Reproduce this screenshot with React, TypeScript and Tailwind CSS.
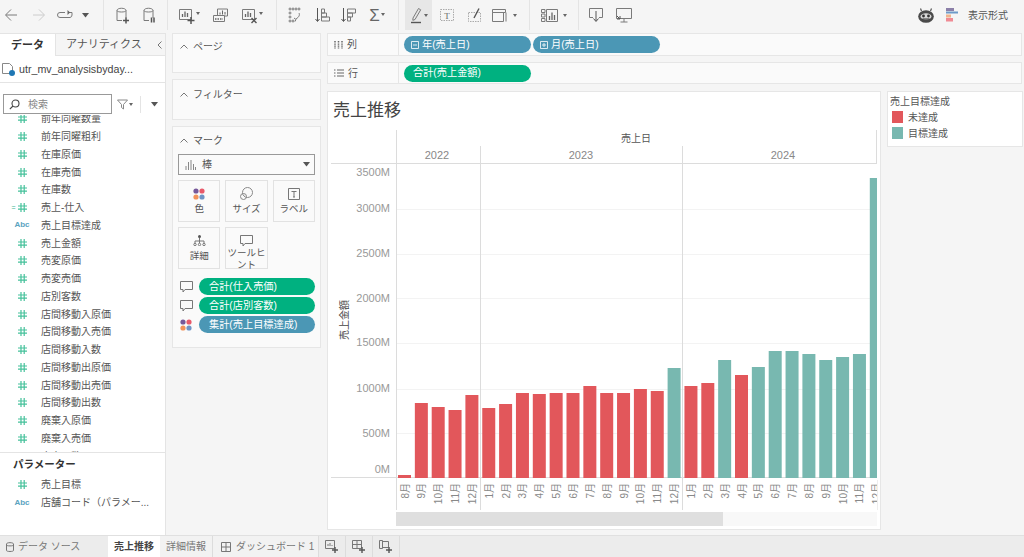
import React from "react";

const G = "#7a7a7a";
const Svg = ({ w = 22, h = 20, children }: { w?: number; h?: number; children: React.ReactNode }) => (
  <svg width={w} height={h} viewBox={`0 0 ${w} ${h}`} fill="none" stroke={G} strokeWidth="1">
    {children}
  </svg>
);
const Caret = () => (
  <svg width="7" height="5" viewBox="0 0 7 5"><path d="M0 0h7L3.500 4.500z" fill="#555" /></svg>
);
const MiniCaret = () => (
  <svg width="4" height="3" viewBox="0 0 4 3"><path d="M0 0h4L2 3z" fill="#666" /></svg>
);
const Sep = () => <div className="w-px h-[30px] bg-[#e4e4e4] shrink-0" />;
const Cell = ({ className, children }: { className: string; children?: React.ReactNode }) => (
  <div className={`flex items-center justify-center shrink-0 h-[30px] ${className}`}>{children}</div>
);
const Db = ({ mark }: { mark: "plus" | "pause" }) => (
  <Svg w={16} h={20}>
    <path d="M3 5.500c0-3 9-3 9 0V13M3 5.500V15.500h5M3 5.500c0 2 9 2 9 0" />
    {mark === "plus" ? (
      <path d="M12 12.500v6M9 15.500h6" stroke="#555" strokeWidth="1.500" />
    ) : (
      <path d="M10.500 12.500v5M13 12.500v5" stroke="#555" strokeWidth="1.500" />
    )}
  </Svg>
);
const ChartBox = ({ mark }: { mark: "plus" | "x" }) => (
  <Svg w={20} h={20}>
    <path d="M1.500 4.500h12v10h-12z" />
    <path d="M4.500 12V9M7 12V6.500M9.500 12V8" stroke="#666" strokeWidth="1.300" />
    {mark === "plus" ? (
      <path d="M13 12v7M9.500 15.500h7" stroke="#555" strokeWidth="1.500" />
    ) : (
      <path d="M10.500 13l5 5M15.500 13l-5 5" stroke="#555" strokeWidth="1.400" />
    )}
  </Svg>
);
const Hash = ({ calc }: { calc?: boolean }) => (
  <span className="relative flex w-[9px] h-[9px]">
    {calc && <span className="absolute -left-[6px] top-0 text-[7px] leading-[9px] text-[#3bb58e]">=</span>}
    <svg width="9" height="9" viewBox="0 0 9 9" stroke="#45c19b" strokeWidth="1.200">
      <path d="M3 0v9M6.200 0v9M0 3h9M0 6.200h9" />
    </svg>
  </span>
);
const Abc = () => <span className="text-[8px] leading-none text-[#5aa3bf] font-bold">Abc</span>;

const fields: [string, string][] = [
  ["前年同曜数量", "n"], ["前年同曜粗利", "n"], ["在庫原価", "n"], ["在庫売価", "n"], ["在庫数", "n"],
  ["売上-仕入", "c"], ["売上目標達成", "a"], ["売上金額", "n"], ["売変原価", "n"], ["売変売価", "n"],
  ["店別客数", "n"], ["店間移動入原価", "n"], ["店間移動入売価", "n"], ["店間移動入数", "n"],
  ["店間移動出原価", "n"], ["店間移動出売価", "n"], ["店間移動出数", "n"], ["廃棄入原価", "n"],
  ["廃棄入売価", "n"], ["廃棄入数", "n"],
];

const FieldRow = ({ name, kind }: { name: string; kind: string }) => (
  <div className="flex items-center h-[17.75px] shrink-0">
    <div className="w-[41px] flex justify-center pl-[3px] shrink-0">
      {kind === "a" ? <Abc /> : <Hash calc={kind === "c"} />}
    </div>
    <span className="text-[10px] text-[#555] whitespace-nowrap">{name}</span>
  </div>
);

const Chevron = () => (
  <svg width="8" height="5" viewBox="0 0 8 5" fill="none" stroke="#777"><path d="M.5 4.500L4 1l3.500 3.500" /></svg>
);

const MarkBtn = ({ label, icon, two }: { label: React.ReactNode; icon: React.ReactNode; two?: boolean }) => (
  <div className="h-[42px] bg-[#fafafa] border border-[#e2e2e2] flex flex-col items-center pt-[6px]">
    <div className="h-[13px] flex items-center justify-center shrink-0">{icon}</div>
    <div className={`text-[9.500px] text-[#555] text-center whitespace-pre ${two ? "leading-[11.500px] mt-[0px]" : "leading-[11px] mt-[3px]"}`}>{label}</div>
  </div>
);

const Bubble = () => (
  <svg width="13" height="12" viewBox="0 0 13 12" fill="none" stroke="#777">
    <path d="M.5.500h12v8H5L3 11V8.500H.5z" />
  </svg>
);
const Dots = () => (
  <svg width="12" height="12" viewBox="0 0 12 12">
    <circle cx="3" cy="3" r="2.600" fill="#76589a" />
    <circle cx="9" cy="3" r="2.600" fill="#e8596a" />
    <circle cx="3" cy="9" r="2.600" fill="#f2925a" />
    <circle cx="9" cy="9" r="2.600" fill="#6f94c6" />
  </svg>
);

const Pill = ({ color, text }: { color: string; text: string }) => (
  <div className={`w-[116px] h-[17px] rounded-full flex items-center ${color} pl-[10px] text-[10.200px] text-white whitespace-nowrap`}>
    {text}
  </div>
);

const Card = ({ title, className, inner }: { title: string; className: string; inner: string }) => (
  <div className={`bg-[#fafafa] border border-[#e6e6e6] shrink-0 ${className}`}>
    <div className={`flex items-center gap-[5px] pl-[7px] ${inner}`}>
      <Chevron />
      <span className="text-[10px] text-[#555]">{title}</span>
    </div>
  </div>
);

const ShelfPill = ({ text, sign }: { text: string; sign?: "-" | "+" }) => (
  <div className={`w-[127px] h-[17px] rounded-full flex items-center text-[10.200px] text-white whitespace-nowrap ${sign ? "bg-[#4b97b5] pl-[7px] gap-[3px]" : "bg-[#00b180] pl-[9px]"}`}>
    {sign && (
      <svg width="8" height="8" viewBox="0 0 8 8" fill="none" stroke="#fff" strokeWidth=".8">
        <path d="M.5.500h7v7h-7z" />
        <path d={sign === "-" ? "M2 4h4" : "M2 4h4M4 2v4"} />
      </svg>
    )}
    {text}
  </div>
);

const RED = "#e2575b";
const TEAL = "#78b8b0";
const bars: [string, number, string][] = [
  ["8月", 475, RED], ["9月", 403, RED], ["10月", 407, RED], ["11月", 410, RED], ["12月", 395, RED],
  ["1月", 408, RED], ["2月", 404, RED], ["3月", 393, RED], ["4月", 394, RED], ["5月", 393, RED],
  ["6月", 393, RED], ["7月", 386, RED], ["8月", 393, RED], ["9月", 393, RED], ["10月", 389, RED],
  ["11月", 391, RED], ["12月", 368, TEAL],
  ["1月", 386, RED], ["2月", 383, RED], ["3月", 360, TEAL], ["4月", 375, RED], ["5月", 367, TEAL],
  ["6月", 351, TEAL], ["7月", 351, TEAL], ["8月", 354, TEAL], ["9月", 360, TEAL], ["10月", 357, TEAL],
  ["11月", 354, TEAL], ["12月", 178, TEAL],
];
const ticks: [string, number, number][] = [
  ["3000M", 209, 208], ["2500M", 254, 253], ["2000M", 298, 298],
  ["1500M", 343, 342], ["1000M", 389, 388], ["500M", 433, 433],
];

const Chart = () => (
  <svg width="552" height="401" viewBox="328 128 552 401" className="block" fontFamily="'Liberation Sans','Noto Sans CJK JP',sans-serif">
    <defs>
      <clipPath id="plotclip"><rect x="327" y="128" width="550" height="382" /></clipPath>
    </defs>
    {ticks.map(([, y]) => (
      <line key={y} x1="396" x2="877" y1={y + 0.5} y2={y + 0.5} stroke="#f3f3f3" />
    ))}
    <line x1="331" x2="877" y1="477.500" y2="477.500" stroke="#dcdcdc" />
    <line x1="331" x2="877" y1="163.500" y2="163.500" stroke="#dcdcdc" />
    <line x1="396.500" x2="396.500" y1="130" y2="510" stroke="#dcdcdc" />
    <line x1="480.500" x2="480.500" y1="146" y2="510" stroke="#dcdcdc" />
    <line x1="682.500" x2="682.500" y1="146" y2="510" stroke="#dcdcdc" />
    <line x1="876.500" x2="876.500" y1="130" y2="163" stroke="#dcdcdc" />
    <line x1="877.500" x2="877.500" y1="480" y2="510" stroke="#eeeeee" />
    <text x="636" y="142" fontSize="10" fill="#555" textAnchor="middle">売上日</text>
    <text x="437" y="159" fontSize="11" fill="#888" textAnchor="middle">2022</text>
    <text x="581" y="159" fontSize="11" fill="#888" textAnchor="middle">2023</text>
    <text x="783" y="159" fontSize="11" fill="#888" textAnchor="middle">2024</text>
    <text x="390" y="176" fontSize="11" fill="#999" textAnchor="end">3500M</text>
    {ticks.map(([t, , ly]) => (
      <text key={t} x="390" y={ly + 4} fontSize="11" fill="#999" textAnchor="end">{t}</text>
    ))}
    <text x="390" y="473" fontSize="11" fill="#999" textAnchor="end">0M</text>
    <text transform="translate(348 320) rotate(-90)" fontSize="10" fill="#444" textAnchor="middle">売上金額</text>
    <g clipPath="url(#plotclip)">
      {bars.map(([m, top, c], i) => {
        const x = 398 + i * 16.85;
        return (
          <g key={i}>
            <rect x={x} y={top} width="13" height={478 - top} fill={c} />
            <text transform={`translate(${x + 10.500} 483) rotate(-90)`} fontSize="10" fill="#888" textAnchor="end">{m}</text>
          </g>
        );
      })}
    </g>
    <rect x="396" y="512" width="481" height="14" fill="#f8f8f8" />
    <rect x="396" y="512" width="327" height="14" fill="#dfdfdf" />
  </svg>
);

export default function App() {
  return (
    <div className="w-[1024px] h-[557px] overflow-hidden bg-[#f5f5f5] flex flex-col font-['Liberation_Sans','Noto_Sans_CJK_JP',sans-serif]">
      {/* Toolbar */}
      <div className="h-[30px] shrink-0 flex items-center">
        <Cell className="w-[22px]"><Svg w={14} h={14}><path d="M13 7H2M7 1.500L1.500 7 7 12.500" /></Svg></Cell>
        <Cell className="w-[34px]"><svg width="14" height="14" viewBox="0 0 14 14" fill="none" stroke="#ccc"><path d="M1 7h11M7 1.500L12.500 7 7 12.500" /></svg></Cell>
        <Cell className="w-[18px]"><Svg w={17} h={12}><path d="M8 3.500H3a2.500 2.500 0 000 5h10a2.500 2.500 0 002-2.500V3.500H11" /><path d="M10.500 1l2.500 2.500L10.500 6z" fill="#666" stroke="none" /></Svg></Cell>
        <Cell className="w-[22px]"><Caret /></Cell>
        <div className="w-[7px] shrink-0" /><Sep />
        <Cell className="w-[36px]"><Db mark="plus" /></Cell>
        <Cell className="w-[17px]"><Db mark="pause" /></Cell>
        <div className="w-[10px] shrink-0" /><Sep />
        <Cell className="w-[42px]"><ChartBox mark="plus" /><span className="-ml-[2px] mb-[3px] flex"><MiniCaret /></span></Cell>
        <Cell className="w-[21px]"><Svg w={18} h={18}><path d="M5.500 3h10v7h-10z" /><path d="M8 8.500V6.500M10.500 8.500V4.500M13 8.500V6" stroke="#666" /><path d="M1.500 9.500h11v6h-11z" fill="#f5f5f5" /><path d="M3 13h8" strokeDasharray="1.500 1" stroke="#666" strokeWidth="1.400" /></Svg></Cell>
        <Cell className="w-[42px]"><ChartBox mark="x" /><span className="-ml-[2px] mb-[3px] flex"><MiniCaret /></span></Cell>
        <div className="w-[3px] shrink-0" /><Sep />
        <Cell className="w-[36px]"><Svg w={16} h={16}><circle cx="6" cy="2" r="1" /><circle cx="9" cy="2" r="1" /><circle cx="12" cy="2" r="1" /><circle cx="3" cy="2" r="1" /><circle cx="3" cy="6" r="1" /><circle cx="3" cy="10" r="1" /><circle cx="3" cy="14" r="1" /><circle cx="6" cy="14" r="1" /><path d="M12 6c1 2 0 4-3 6M7 11l2 1.500-1 2" /></Svg></Cell>
        <Cell className="w-[19px]"><Svg w={16} h={16}><path d="M2.500 1v13M.5 12l2 2.500 2-2.500" stroke="#555" /><path d="M6.500 2h3v4h-3zM6.500 6h5v4h-5zM6.500 10h8v4h-8z" /></Svg></Cell>
        <Cell className="w-[34px]"><Svg w={16} h={16}><path d="M2.500 1v13M.5 12l2 2.500 2-2.500" stroke="#555" /><path d="M6.500 2h8v4h-8zM6.500 6h5v4h-5zM6.500 10h3v4h-3z" /></Svg></Cell>
        <Cell className="w-[22px]"><span className="text-[17px] text-[#666] leading-none">Σ</span><span className="ml-[1px] mb-[2px] flex"><MiniCaret /></span></Cell>
        <div className="w-[10px] shrink-0" /><Sep />
        <div className="w-[6px] shrink-0" />
        <Cell className="w-[27px] bg-[#e7e7e7] gap-[2px]">
          <Svg w={12} h={18}><path d="M3 12L8.500 2.500l2.200 1.300L5 13.500l-2.200.8z" /><path d="M1 16.500h10" stroke="#555" strokeWidth="1.400" /></Svg>
          <MiniCaret />
        </Cell>
        <Cell className="w-[29px]"><Svg w={16} h={14}><path d="M1.500 1.500h13v11h-13z" strokeDasharray="1.500 1" stroke="#aaa" /><text x="8" y="10.500" fontSize="9" textAnchor="middle" fill="#666" stroke="none" fontFamily="Liberation Serif">T</text></Svg></Cell>
        <Cell className="w-[27px]"><Svg w={16} h={16}><path d="M1.500 5.500h12v9h-12z" strokeDasharray="1.500 1" stroke="#aaa" /><path d="M7 11l5-9.500" stroke="#555" strokeWidth="1.400" /></Svg></Cell>
        <Cell className="w-[24px]"><Svg w={16} h={16}><path d="M.5 2.500h13v3h-13zM.5 5.500h11v9h-11zM14 5.500v9" /></Svg></Cell>
        <Cell className="w-[5px]"><MiniCaret /></Cell>
        <div className="w-[12px] shrink-0" /><Sep />
        <div className="w-[8px] shrink-0" />
        <Cell className="w-[24px]"><Svg w={18} h={16}><path d="M.5 2.500h3.500v3H.5zM.5 7h3.500v3H.5zM.5 11.500h3.500v3H.5z" /><path d="M5.500 2.500h11v12h-11z" /><path d="M8.500 13V9M11 13V5.500M13.500 13V8" stroke="#666" strokeWidth="1.300" /></Svg></Cell>
        <Cell className="w-[6px]"><MiniCaret /></Cell>
        <div className="w-[10px] shrink-0" /><Sep />
        <Cell className="w-[34px]"><Svg w={14} h={16}><path d="M4 10.500H.5v-9h13v9H10" /><path d="M7 4v10M4.500 11.500L7 14.500l2.500-3" stroke="#555" /></Svg></Cell>
        <Cell className="w-[21px]"><Svg w={18} h={16}><path d="M1.500 1.500h15v10h-15z" /><path d="M9 12v3M5.500 15h7" /><path d="M2 9l3 3M2 12h3V9" stroke="#555" /></Svg></Cell>
        <div className="flex-1" />
        <svg width="16" height="15" viewBox="0 0 16 15" className="shrink-0">
          <path d="M3.500 3L2.500 .5M12.500 3l1-2.500" stroke="#555" strokeWidth="1.200" />
          <ellipse cx="8" cy="8.500" rx="7.800" ry="6.300" fill="#4a4a4a" />
          <ellipse cx="8" cy="8.500" rx="5.500" ry="3.200" fill="#d8d8d8" />
          <circle cx="5.500" cy="8" r="1.400" fill="#333" /><circle cx="10.500" cy="8" r="1.400" fill="#333" />
          <path d="M4.500 11h7" stroke="#333" />
        </svg>
        <svg width="13" height="14" viewBox="0 0 13 14" className="shrink-0 ml-[12px]">
          <rect x="0" y="0" width="8" height="3" fill="#8b7fa8" />
          <rect x="0" y="3.500" width="12" height="2" fill="#6d9ac8" />
          <rect x="0" y="6.500" width="5" height="3" fill="#f0b48c" />
          <rect x="0" y="10" width="7" height="3.500" fill="#f08a94" />
        </svg>
        <span className="text-[10px] text-[#555] ml-[9px] mr-[16px] whitespace-nowrap">表示形式</span>
      </div>

      <div className="flex-1 flex min-h-0 pt-[3px]">
        {/* Data pane */}
        <div className="w-[166px] shrink-0 bg-white border-r border-[#e4e4e4] border-t flex flex-col">
          <div className="h-[22px] flex shrink-0">
            <div className="w-[55px] flex items-center justify-center text-[11px] font-bold text-[#333]">データ</div>
            <div className="flex-1 flex items-center justify-between bg-[#f5f5f5] border-l border-b border-[#e4e4e4] pl-[10px] pr-[3px] text-[11px] text-[#555]">
              <span className="whitespace-nowrap">アナリティクス</span>
              <svg width="5" height="8" viewBox="0 0 5 8" fill="none" stroke="#777"><path d="M4.500.5L1 4l3.500 3.500" /></svg>
            </div>
          </div>
          <div className="h-[27px] shrink-0 flex items-center pl-[2px] gap-[4px] border-b border-[#e4e4e4]">
            <span className="relative flex w-[13px] h-[13px] shrink-0">
              <svg width="12" height="12" viewBox="0 0 12 12" fill="none" stroke="#888"><path d="M.5.500h7l3 3v7h-10z" /></svg>
              <span className="absolute right-0 bottom-0 w-[6px] h-[6px] rounded-full bg-[#1f77b4]" />
            </span>
            <span className="text-[10.700px] text-[#444] whitespace-nowrap">utr_mv_analysisbyday...</span>
          </div>
          <div className="h-[32px] shrink-0 flex items-end pl-[3px] pb-[1px]">
            <div className="w-[109px] h-[20px] border border-[#999] bg-white flex items-center pl-[5px] gap-[8px] shrink-0">
              <svg width="11" height="11" viewBox="0 0 11 11" fill="none" stroke="#444" strokeWidth="1.100"><circle cx="6.500" cy="4.500" r="3.500" /><path d="M4 7L.8 10.200" /></svg>
              <span className="text-[10px] text-[#888]">検索</span>
            </div>
            <div className="flex items-center h-[20px] ml-[5px] gap-[1px]">
              <svg width="11" height="11" viewBox="0 0 11 11" fill="none" stroke="#888"><path d="M.5 1h10L6.500 5.500V10L4.500 8.500V5.500z" /></svg>
              <MiniCaret />
            </div>
            <div className="w-px h-[17px] bg-[#e4e4e4] ml-[7px] mb-[1px]" />
            <div className="h-[20px] flex items-center ml-[10px]"><Caret /></div>
          </div>
          <div className="h-[338px] shrink-0 overflow-hidden border-b border-[#e4e4e4]">
            <div className="-mt-[5px] flex flex-col">
              {fields.map(([n, k]) => <FieldRow key={n} name={n} kind={k} />)}
            </div>
          </div>
          <div className="flex-1 flex flex-col">
            <div className="text-[10.500px] font-bold text-[#333] pl-[13px] pt-[4px] h-[22px]">パラメーター</div>
            <div className="pt-[1px]"><FieldRow name="売上目標" kind="n" /><FieldRow name="店舗コード（パラメー..." kind="a" /></div>
          </div>
        </div>

        {/* Cards pane */}
        <div className="w-[161px] shrink-0 pl-[6px] pr-[6px] flex flex-col gap-[6px]">
          <Card title="ページ" className="h-[40px]" inner="pt-[5px]" />
          <Card title="フィルター" className="h-[41px]" inner="pt-[7px]" />
          <div className="h-[222px] bg-[#fafafa] border border-[#e6e6e6] shrink-0 px-[5px]">
            <div className="flex items-center gap-[5px] pl-[2px] pt-[5px] h-[21px]">
              <Chevron />
              <span className="text-[10px] text-[#555]">マーク</span>
            </div>
            <div className="h-[21px] mt-[6px] border border-[#999] bg-[#fafafa] flex items-center pl-[6px] pr-[4px] gap-[6px]">
              <svg width="11" height="10" viewBox="0 0 11 10" stroke="#888"><path d="M1 10V6M3.500 10V2M6 10V0M8.500 10V4M10.500 10V7" /></svg>
              <span className="text-[10px] text-[#555]">棒</span>
              <span className="ml-auto flex"><Caret /></span>
            </div>
            <div className="grid grid-cols-3 gap-x-[5px] gap-y-[5px] mt-[5px]">
              <MarkBtn label="色" icon={<Dots />} />
              <MarkBtn label="サイズ" icon={<svg width="13" height="13" viewBox="0 0 13 13" fill="none" stroke="#888"><circle cx="7.500" cy="5.500" r="5" /><circle cx="3.500" cy="9.500" r="3" /></svg>} />
              <MarkBtn label="ラベル" icon={<svg width="12" height="12" viewBox="0 0 12 12" fill="none" stroke="#777"><path d="M.5.500h11v11H.5zM3.500 3.500h5M6 3.500v5.500M5 9h2" /></svg>} />
              <MarkBtn label="詳細" icon={<svg width="13" height="11" viewBox="0 0 13 11" fill="none" stroke="#777"><circle cx="6.500" cy="1.500" r="1.500" fill="#555" stroke="none" /><path d="M6.500 3v3M2 8V6h9v2M6.500 6v2" /><circle cx="2" cy="9.500" r="1.200" /><circle cx="6.500" cy="9.500" r="1.200" /><circle cx="11" cy="9.500" r="1.200" /></svg>} />
              <MarkBtn two label={"ツールヒ\nント"} icon={<Bubble />} />
            </div>
            <div className="flex flex-col gap-[2px] mt-[9px]">
              <div className="flex items-center justify-between pl-[2px]"><Bubble /><Pill color="bg-[#00b180]" text="合計(仕入売価)" /></div>
              <div className="flex items-center justify-between pl-[2px]"><Bubble /><Pill color="bg-[#00b180]" text="合計(店別客数)" /></div>
              <div className="flex items-center justify-between pl-[2px]"><Dots /><Pill color="bg-[#4b97b5]" text="集計(売上目標達成)" /></div>
            </div>
          </div>
        </div>

        {/* Main */}
        <div className="flex-1 min-w-0 flex flex-col pr-[2px]">
          <div className="h-[23px] shrink-0 bg-[#fafafa] border border-[#e6e6e6] flex items-center">
            <div className="w-[71px] h-full shrink-0 border-r border-[#e6e6e6] flex items-center pl-[6px] gap-[4px]">
              <svg width="9" height="9" viewBox="0 0 9 9" stroke="#666" strokeWidth="1.500"><path d="M1 1v8M4.500 1v8M8 1v8" strokeDasharray="1 .6" /></svg>
              <span className="text-[10px] text-[#555]">列</span>
            </div>
            <div className="flex items-center gap-[2px] pl-[5px]">
              <ShelfPill text="年(売上日)" sign="-" />
              <ShelfPill text="月(売上日)" sign="+" />
            </div>
          </div>
          <div className="h-[22px] shrink-0 mt-[6px] bg-[#fafafa] border border-[#e6e6e6] flex items-center">
            <div className="w-[71px] h-full shrink-0 border-r border-[#e6e6e6] flex items-center pl-[6px] gap-[4px]">
              <svg width="10" height="8" viewBox="0 0 10 8" stroke="#666"><path d="M0 1h1.500M3 1h7M0 4h1.500M3 4h7M0 7h1.500M3 7h7" /></svg>
              <span className="text-[10px] text-[#555]">行</span>
            </div>
            <div className="pl-[5px]"><ShelfPill text="合計(売上金額)" /></div>
          </div>
          <div className="flex mt-[7px] gap-[6px] items-start">
            <div className="w-[554px] h-[439px] shrink-0 bg-white border border-[#e6e6e6] flex flex-col overflow-hidden">
              <div className="h-[36px] shrink-0 pl-[5px] pt-[7px] text-[17px] leading-[24px] text-[#444]">売上推移</div>
              <Chart />
            </div>
            <div className="w-[136px] h-[56px] shrink-0 bg-white border border-[#e6e6e6] pt-[3px] pl-[2px]">
              <div className="text-[10px] leading-[13px] text-[#555]">売上目標達成</div>
              <div className="flex items-center gap-[5px] pl-[2px] h-[16px] mt-[1px]"><span className="w-[11px] h-[12px] bg-[#e2575b]" /><span className="text-[10px] text-[#555]">未達成</span></div>
              <div className="flex items-center gap-[5px] pl-[2px] h-[16px]"><span className="w-[11px] h-[12px] bg-[#78b8b0]" /><span className="text-[10px] text-[#555]">目標達成</span></div>
            </div>
          </div>
        </div>
      </div>

      {/* Tabs */}
      <div className="h-[22px] shrink-0 bg-[#ececec] border-t border-[#e0e0e0] flex items-stretch text-[10px] text-[#777]">
        <div className="w-[108px] flex items-center pl-[6px] gap-[4px] shrink-0 whitespace-nowrap">
          <svg width="8" height="10" viewBox="0 0 8 10" fill="none" stroke="#777"><path d="M.5 2v6.500c0 1.300 7 1.300 7 0V2c0-1.800-7-1.800-7 0zM.5 3c0 1.200 7 1.200 7 0" /></svg>
          データ ソース
        </div>
        <div className="w-[52px] bg-white flex items-center justify-center font-bold text-[#444] shrink-0">売上推移</div>
        <div className="w-[53px] bg-[#f2f2f2] border-r border-[#dcdcdc] flex items-center justify-center shrink-0">詳細情報</div>
        <div className="w-[106px] bg-[#f2f2f2] border-r border-[#dcdcdc] flex items-center pl-[8px] gap-[5px] shrink-0 whitespace-nowrap">
          <svg width="10" height="10" viewBox="0 0 10 10" fill="none" stroke="#777"><path d="M.5.500h9v9h-9zM5 .5v9M.5 5h9" /></svg>
          ダッシュボード 1
        </div>
        <div className="w-[27px] border-r border-[#dcdcdc] flex items-center justify-center shrink-0">
          <svg width="14" height="13" viewBox="0 0 14 13" fill="none" stroke="#777"><path d="M.5.500h9v8h-9zM3 6V4M5 6V3M7 6V5" /><path d="M10 7v6M7 10h6" stroke="#555" strokeWidth="1.400" /></svg>
        </div>
        <div className="w-[27px] border-r border-[#dcdcdc] flex items-center justify-center shrink-0">
          <svg width="14" height="13" viewBox="0 0 14 13" fill="none" stroke="#777"><path d="M.5.500h9v8h-9zM5 .5v8M.5 4.500h9" /><path d="M10 7v6M7 10h6" stroke="#555" strokeWidth="1.400" /></svg>
        </div>
        <div className="w-[27px] border-r border-[#dcdcdc] flex items-center justify-center shrink-0">
          <svg width="14" height="13" viewBox="0 0 14 13" fill="none" stroke="#777"><path d="M.5.500h3v8h-3zM3.500 1.500h6v6h-6z" /><path d="M10 7v6M7 10h6" stroke="#555" strokeWidth="1.400" /></svg>
        </div>
      </div>
    </div>
  );
}
